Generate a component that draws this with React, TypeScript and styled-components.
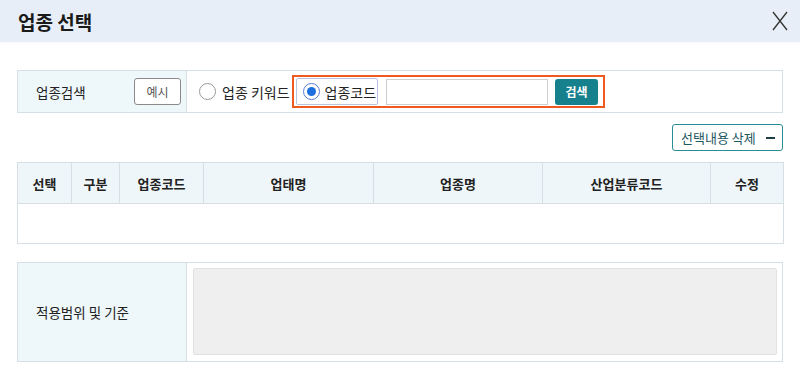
import styled, { createGlobalStyle } from 'styled-components';

const COLUMNS = [
  { label: '선택', width: 54 },
  { label: '구분', width: 48 },
  { label: '업종코드', width: 84 },
  { label: '업태명', width: 170 },
  { label: '업종명', width: 169 },
  { label: '산업분류코드', width: 168 },
  { label: '수정', width: 73 },
];

export default function App() {
  return (
    <>
      <GlobalStyle />
      <Modal>
        <Header>
          <Title>업종 선택</Title>
          <CloseBtn aria-label="닫기">
            <svg width="18" height="20" viewBox="0 0 18 20">
              <path d="M2 1 L16 19 M16 1 L2 19" stroke="#333" strokeWidth="1.3" fill="none" />
            </svg>
          </CloseBtn>
        </Header>

        <Body>
          <SearchRow>
            <LabelCell>
              <span>업종검색</span>
              <SmallBtn>예시</SmallBtn>
            </LabelCell>
            <SearchCell>
              <RadioLabel>
                <Radio />
                업종 키워드
              </RadioLabel>
              <Highlight>
                <FocusBox>
                  <Radio checked />
                  업종코드
                </FocusBox>
                <TextInput />
                <SearchBtn>검색</SearchBtn>
              </Highlight>
            </SearchCell>
          </SearchRow>

          <Toolbar>
            <OutlineBtn>
              선택내용 삭제
              <Minus />
            </OutlineBtn>
          </Toolbar>

          <Table>
            <colgroup>
              {COLUMNS.map((c) => (
                <col key={c.label} style={{ width: c.width }} />
              ))}
            </colgroup>
            <thead>
              <tr>
                {COLUMNS.map((c) => (
                  <Th key={c.label}>{c.label}</Th>
                ))}
              </tr>
            </thead>
            <tbody>
              <tr>
                <Td colSpan={COLUMNS.length} />
              </tr>
            </tbody>
          </Table>

          <InfoRow>
            <InfoLabel>적용범위 및 기준</InfoLabel>
            <InfoCell>
              <InfoBox />
            </InfoCell>
          </InfoRow>
        </Body>
      </Modal>
    </>
  );
}

const Radio = ({ checked = false }: { checked?: boolean }) => (
  <RadioCircle $checked={checked}>{checked && <RadioDot />}</RadioCircle>
);

const GlobalStyle = createGlobalStyle`
  * { box-sizing: border-box; }
  body {
    margin: 0;
    background: #fff;
    font-family: "Noto Sans CJK KR", "Noto Sans", sans-serif;
    color: #222;
  }
`;

const Modal = styled.div`
  width: 800px;
  height: 368px;
  background: #fff;
  overflow: hidden;
`;

const Header = styled.div`
  height: 42px;
  display: flex;
  align-items: center;
  justify-content: space-between;
  padding: 0 11px 0 18px;
  background: #e8eef7;
  box-shadow: 0 1px 2px rgba(0, 0, 0, 0.04);
`;

const Title = styled.h1`
  margin: 0;
  font-size: 19px;
  font-weight: 700;
  color: #1a1a1a;
`;

const CloseBtn = styled.button`
  border: 0;
  background: none;
  padding: 0;
  width: 18px;
  height: 20px;
  display: flex;
`;

const Body = styled.div`
  padding: 28px 17px 0;
`;

const SearchRow = styled.div`
  display: flex;
  height: 43px;
  border: 1px solid #d6dfe3;
`;

const LabelCell = styled.div`
  width: 169px;
  flex-shrink: 0;
  display: flex;
  align-items: center;
  justify-content: space-between;
  padding: 0 5px 0 18px;
  background: #eef7f9;
  border-right: 1px solid #d6dfe3;
  font-size: 13.5px;
  color: #222;
`;

const SmallBtn = styled.button`
  width: 47px;
  height: 27px;
  border: 1px solid #8a8a8a;
  border-radius: 3px;
  background: #fff;
  font-family: inherit;
  font-size: 12px;
  color: #555;
  padding: 0;
`;

const SearchCell = styled.div`
  flex: 1;
  display: flex;
  align-items: center;
  padding-left: 12px;
  gap: 2px;
`;

const RadioLabel = styled.label`
  display: flex;
  align-items: center;
  gap: 6px;
  font-size: 14px;
  color: #222;
`;

const RadioCircle = styled.span<{ $checked: boolean }>`
  width: 17px;
  height: 17px;
  border-radius: 50%;
  border: 1px solid ${(p) => (p.$checked ? '#5a7bd8' : '#9a9a9a')};
  background: #fff;
  display: flex;
  align-items: center;
  justify-content: center;
`;

const RadioDot = styled.span`
  width: 9px;
  height: 9px;
  border-radius: 50%;
  background: #1d6fe0;
`;

const Highlight = styled.div`
  display: flex;
  align-items: center;
  gap: 7px;
  height: 33px;
  padding: 0 5px 0 2px;
  border: 2px solid #ef5a22;
`;

const FocusBox = styled.label`
  display: flex;
  align-items: center;
  gap: 5px;
  height: 27px;
  padding: 0 1px 0 6px;
  border: 1px solid #b7c4e4;
  border-radius: 2px;
  font-size: 14px;
  color: #222;
`;

const TextInput = styled.input`
  width: 162px;
  height: 26px;
  border: 1px solid #cfcfcf;
  margin-left: 1px;
`;

const SearchBtn = styled.button`
  width: 43px;
  height: 26px;
  border: 0;
  border-radius: 3px;
  background: #16808c;
  color: #fff;
  font-family: inherit;
  font-size: 12px;
  font-weight: 700;
  padding: 0;
`;

const Toolbar = styled.div`
  display: flex;
  justify-content: flex-end;
  margin-top: 11px;
`;

const OutlineBtn = styled.button`
  display: flex;
  align-items: center;
  gap: 10px;
  height: 27px;
  width: 111px;
  padding: 0 0 0 8px;
  border: 1px solid #2a8d96;
  border-radius: 3px;
  background: #fff;
  font-family: inherit;
  font-size: 13px;
  color: #1d5860;
`;

const Minus = styled.span`
  width: 9px;
  height: 2px;
  background: #1d3f44;
`;

const Table = styled.table`
  width: 100%;
  margin-top: 11px;
  border-collapse: collapse;
  table-layout: fixed;
`;

const Th = styled.th`
  height: 41px;
  padding: 0;
  background: #eef6f9;
  border: 1px solid #d6dfe3;
  font-size: 13px;
  font-weight: 700;
  color: #222;
`;

const Td = styled.td`
  height: 40px;
  border: 1px solid #d6dfe3;
`;

const InfoRow = styled.div`
  display: flex;
  height: 100px;
  margin-top: 18px;
  border: 1px solid #d6dfe3;
`;

const InfoLabel = styled.div`
  width: 169px;
  flex-shrink: 0;
  display: flex;
  align-items: center;
  padding-left: 18px;
  background: #eef7f9;
  border-right: 1px solid #d6dfe3;
  font-size: 13.5px;
  color: #222;
`;

const InfoCell = styled.div`
  flex: 1;
  padding: 5px 5px 6px 6px;
`;

const InfoBox = styled.div`
  height: 100%;
  background: #efefef;
  border: 1px solid #e2e2e2;
  border-radius: 2px;
`;
